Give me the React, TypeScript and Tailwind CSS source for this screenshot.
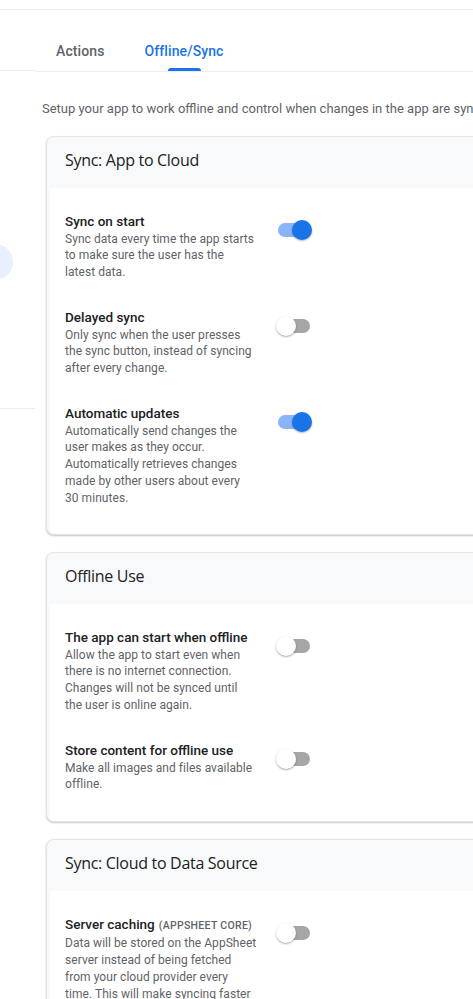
import React from "react";

type Row = { title: string; tag?: string; desc: string[]; on: boolean };

const Toggle = ({ on }: { on: boolean }) => (
  <div className="relative w-[36px] h-[20px] shrink-0 mt-[8px]">
    <div
      className={
        on
          ? "absolute left-[2px] top-[3px] w-[30px] h-[14px] rounded-full bg-[#8ab4f8]"
          : "absolute left-[2px] top-[3px] w-[32px] h-[14px] rounded-full bg-[#a6a6a6]"
      }
    />
    <div
      className={
        on
          ? "absolute left-[16px] top-0 w-[20px] h-[20px] rounded-full bg-[#1a73e8] shadow-[0_1px_2px_rgba(0,0,0,0.3)]"
          : "absolute left-0 top-0 w-[20px] h-[20px] rounded-full bg-white shadow-[0_1px_2px_rgba(0,0,0,0.35)]"
      }
    />
  </div>
);

const Card = ({ title, rows }: { title: string; rows: Row[] }) => (
  <div className="w-[620px] rounded-[8px] border border-[#e3e4e6] bg-[#f8f9fa] shadow-[0_1px_2px_rgba(60,64,67,0.3)] overflow-hidden">
    <div className="pl-[18px] pt-[13px] pb-[18px] text-[16px] leading-[20px] text-[#202124] font-['Open_Sans',Roboto,sans-serif] tracking-[-0.3px]">
      {title}
    </div>
    <div className="ml-[3px] bg-white pl-[15px] pt-[24px] pb-[28px] flex flex-col gap-[27.5px]">
      {rows.map((r) => (
        <div key={r.title} className="flex">
          <div className="w-[192px] shrink-0">
            <div className="text-[13.5px] leading-[18px] font-medium text-[#202124] whitespace-nowrap">
              {r.title}
              {r.tag && (
                <span className="ml-[4px] text-[10.5px] font-medium text-[#5f6368] tracking-[0.3px]">
                  {r.tag}
                </span>
              )}
            </div>
            <div className="mt-[0.5px]">
              {r.desc.map((d) => (
                <div
                  key={d}
                  className="text-[12px] leading-[16.7px] text-[#5f6368] tracking-[0.05px] whitespace-nowrap"
                >
                  {d}
                </div>
              ))}
            </div>
          </div>
          <div className="ml-[19px]">
            <Toggle on={r.on} />
          </div>
        </div>
      ))}
    </div>
  </div>
);

export default function App() {
  return (
    <div className="w-[473px] h-[999px] overflow-hidden bg-white font-['Roboto',sans-serif]">
      <div className="h-[10px] border-b border-[#ebecee]" />
      <div className="flex">
        <div className="w-[35px] shrink-0 overflow-hidden flex flex-col">
          <div className="h-[61px] border-b border-[#ebecee]" />
          <div className="w-[36px] h-[36px] rounded-full bg-[#e8f0fe] -ml-[23px] mt-[173px]" />
          <div className="mt-[128px] border-b border-[#ebecee]" />
        </div>
        <div className="w-[700px] shrink-0">
          <div className="h-[62px] border-b border-[#ebecee] flex pl-[21px] gap-[40px]">
            <div className="flex flex-col justify-end">
              <div className="text-[14px] leading-[20px] font-medium text-[#5f6368] tracking-[0.1px]">
                Actions
              </div>
              <div className="h-[10px]" />
            </div>
            <div className="flex flex-col justify-end items-center">
              <div className="text-[14px] leading-[20px] font-medium text-[#1a73e8] tracking-[0.1px]">
                Offline/Sync
              </div>
              <div className="h-[7px]" />
              <div className="w-[33px] h-[3px] rounded-t-[3px] bg-[#1a73e8]" />
            </div>
          </div>
          <div className="pl-[7px] mt-[27px] text-[13px] leading-[20px] text-[#5f6368] whitespace-nowrap">
            Setup your app to work offline and control when changes in the app are synced.
          </div>
          <div className="pl-[11px] mt-[17px] flex flex-col gap-[17px]">
            <Card
              title="Sync: App to Cloud"
              rows={[
                {
                  title: "Sync on start",
                  desc: ["Sync data every time the app starts", "to make sure the user has the", "latest data."],
                  on: true,
                },
                {
                  title: "Delayed sync",
                  desc: ["Only sync when the user presses", "the sync button, instead of syncing", "after every change."],
                  on: false,
                },
                {
                  title: "Automatic updates",
                  desc: [
                    "Automatically send changes the",
                    "user makes as they occur.",
                    "Automatically retrieves changes",
                    "made by other users about every",
                    "30 minutes.",
                  ],
                  on: true,
                },
              ]}
            />
            <Card
              title="Offline Use"
              rows={[
                {
                  title: "The app can start when offline",
                  desc: [
                    "Allow the app to start even when",
                    "there is no internet connection.",
                    "Changes will not be synced until",
                    "the user is online again.",
                  ],
                  on: false,
                },
                {
                  title: "Store content for offline use",
                  desc: ["Make all images and files available", "offline."],
                  on: false,
                },
              ]}
            />
            <Card
              title="Sync: Cloud to Data Source"
              rows={[
                {
                  title: "Server caching",
                  tag: "(APPSHEET CORE)",
                  desc: [
                    "Data will be stored on the AppSheet",
                    "server instead of being fetched",
                    "from your cloud provider every",
                    "time. This will make syncing faster",
                    "but data may be stale.",
                  ],
                  on: false,
                },
              ]}
            />
          </div>
        </div>
      </div>
    </div>
  );
}
